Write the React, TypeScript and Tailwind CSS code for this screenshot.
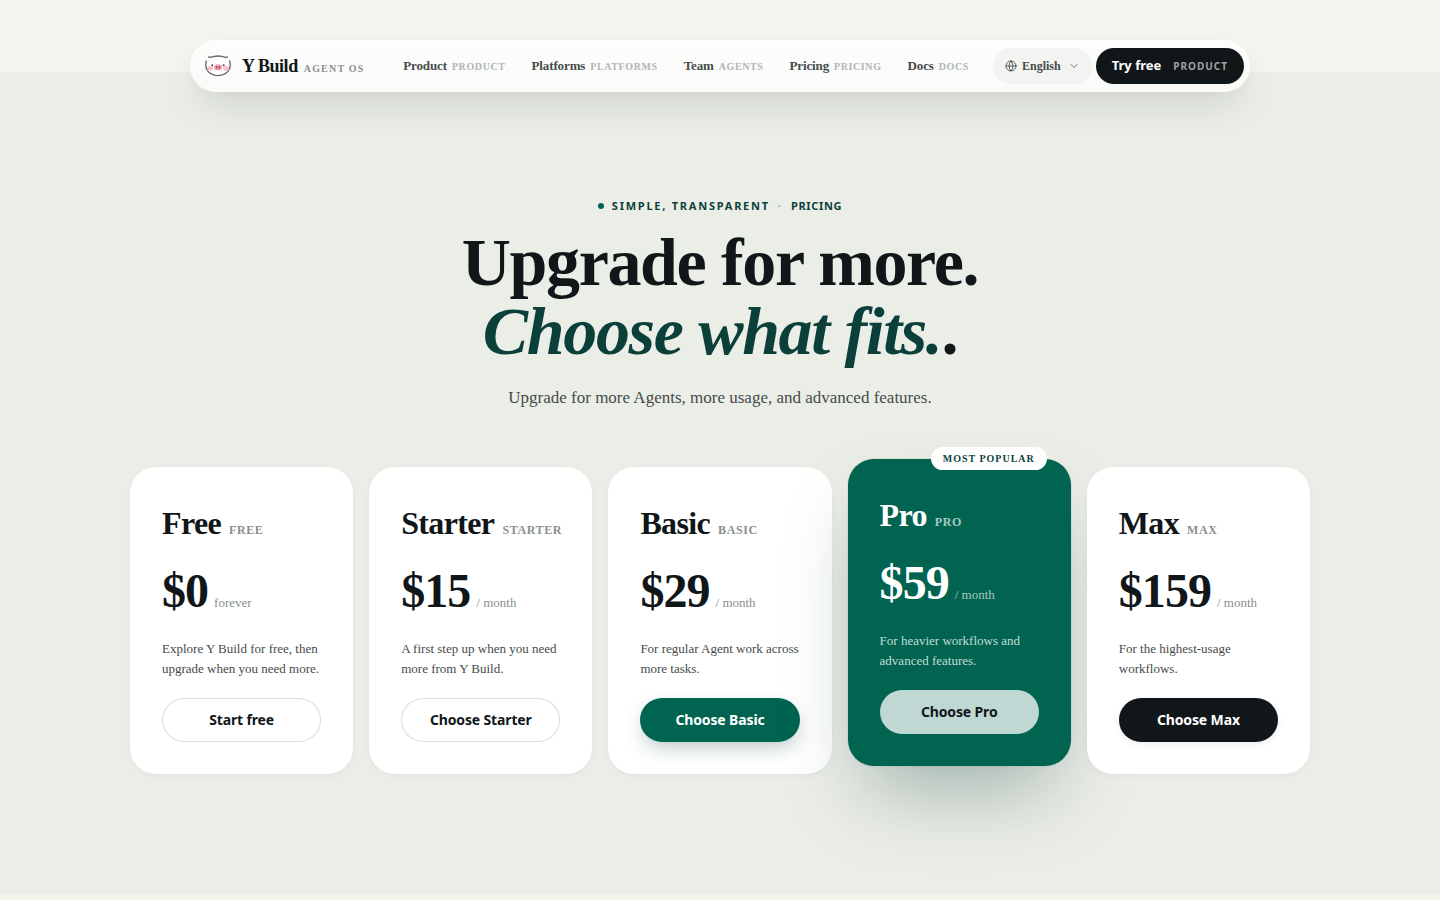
import { ChevronDown, Globe } from 'lucide-react'
import clsx from 'clsx'

interface Plan {
    name: string
    price: string
    period: string
    description: string
    cta: string
    variant: 'outline' | 'green' | 'light' | 'dark'
    popular?: boolean
}

const navLinks = [
    { label: 'Product', tag: 'Product' },
    { label: 'Platforms', tag: 'Platforms' },
    { label: 'Team', tag: 'Agents' },
    { label: 'Pricing', tag: 'Pricing' },
    { label: 'Docs', tag: 'Docs' },
]

const plans: Plan[] = [
    {
        name: 'Free',
        price: '$0',
        period: 'forever',
        description: 'Explore Y Build for free, then upgrade when you need more.',
        cta: 'Start free',
        variant: 'outline',
    },
    {
        name: 'Starter',
        price: '$15',
        period: '/ month',
        description: 'A first step up when you need more from Y Build.',
        cta: 'Choose Starter',
        variant: 'outline',
    },
    {
        name: 'Basic',
        price: '$29',
        period: '/ month',
        description: 'For regular Agent work across more tasks.',
        cta: 'Choose Basic',
        variant: 'green',
    },
    {
        name: 'Pro',
        price: '$59',
        period: '/ month',
        description: 'For heavier workflows and advanced features.',
        cta: 'Choose Pro',
        variant: 'light',
        popular: true,
    },
    {
        name: 'Max',
        price: '$159',
        period: '/ month',
        description: 'For the highest-usage workflows.',
        cta: 'Choose Max',
        variant: 'dark',
    },
]

const buttonStyles = {
    outline: 'bg-white text-[#111618] border border-[#111618]/15',
    green: 'bg-[#006450] text-white shadow-[0_8px_20px_-4px_rgba(10,60,56,0.3)]',
    light: 'bg-[#bfd8d3] text-[#111618]',
    dark: 'bg-[#111618] text-white shadow-[0_2px_6px_rgba(17,22,24,0.08)]',
}

function PigLogo() {
    return (
        <svg viewBox="0 0 84 84" className="w-7 h-7" fill="none" aria-hidden="true">
            <circle cx="42" cy="42" r="41" fill="#fff" stroke="#f0f0ee" />
            <path d="M14 15q7 2 13 -1q15-4 30 0q6 3 13 1" stroke="#6a6a70" strokeWidth="4" strokeLinecap="round" />
            <path d="M7 27C3 43 7 57 20 65c13 7 31 7 44 0c13-8 17-22 13-38" stroke="#6a6a70" strokeWidth="4" strokeLinecap="round" />
            <ellipse cx="18" cy="49" rx="9" ry="7" fill="#f9c0c8" />
            <ellipse cx="66" cy="49" rx="9" ry="7" fill="#f9c0c8" />
            <circle cx="25" cy="40" r="3" fill="#4a4044" />
            <circle cx="59" cy="40" r="3" fill="#4a4044" />
            <ellipse cx="42" cy="46" rx="12" ry="9" fill="#f09aa6" />
            <ellipse cx="38" cy="46" rx="2" ry="4" fill="#a84a5a" />
            <ellipse cx="46" cy="46" rx="2" ry="4" fill="#a84a5a" />
        </svg>
    )
}

function Header() {
    return (
        <header className="relative z-10 px-6 pt-10">
            <nav className="mx-auto flex min-h-[52px] max-w-[1060px] items-center justify-between rounded-full bg-linear-to-b from-[#fdfefc] to-[#fafbf8] py-2 pl-3.5 pr-1.5 shadow-[0_18px_40px_-12px_rgba(17,22,24,0.18),0_2px_8px_rgba(17,22,24,0.03)]">
                <a href="#" className="flex items-center gap-2.5">
                    <PigLogo />
                    <span className="flex items-baseline gap-1.5">
                        <span className="text-lg font-bold tracking-tight text-[#111618]">Y Build</span>
                        <span className="text-[10px] font-semibold uppercase tracking-[0.12em] text-[#8a8f8f]">Agent OS</span>
                    </span>
                </a>

                <div className="flex items-center gap-6">
                    <div className="flex items-center gap-[26px]">
                        {navLinks.map((link) => (
                            <a key={link.label} href="#" className="flex items-baseline gap-[5px]">
                                <span className="text-[13px] font-semibold tracking-[-0.01em] text-[#454b4b]">{link.label}</span>
                                <span className="text-[10px] font-semibold uppercase tracking-[0.06em] text-[#b0b5b4]">{link.tag}</span>
                            </a>
                        ))}
                    </div>

                    <div className="flex items-center gap-1">
                        <button type="button" aria-haspopup="listbox" className="flex h-9 items-center gap-[5px] rounded-full bg-[#f3f4f1] px-3 text-xs font-semibold text-[#454b4b]">
                            <Globe className="w-3 h-3" strokeWidth={1.75} />
                            English
                            <ChevronDown className="w-3 h-3 ml-0.5" strokeWidth={1.5} />
                        </button>
                        <a href="#" className="flex h-9 items-center gap-3 rounded-full bg-[#111618] px-4 font-['Noto_Sans',sans-serif]">
                            <span className="text-[13px] font-bold text-white">Try free</span>
                            <span className="text-[10px] font-bold uppercase tracking-[0.1em] text-[#a0a2a3]">Product</span>
                        </a>
                    </div>
                </div>
            </nav>
        </header>
    )
}

function PlanCard({ plan }: { plan: Plan }) {
    const { popular } = plan

    return (
        <article
            className={clsx(
                'relative flex flex-col rounded-[26px] p-8',
                popular
                    ? '-translate-y-2 bg-[#006450] text-white shadow-[0_40px_80px_-20px_rgba(10,60,56,0.36),0_0_0_1px_rgba(10,60,56,0.06)]'
                    : 'bg-white text-[#111618] shadow-[0_2px_6px_rgba(17,22,24,0.04)]'
            )}
        >
            {popular && (
                <span className="absolute -top-3 right-6 rounded-full bg-white px-3 py-1 text-[10px] leading-[15px] font-bold uppercase tracking-[0.1em] text-[#0b3f3a]">
                    Most popular
                </span>
            )}
            <h2 className="flex items-baseline gap-2 whitespace-nowrap text-[32px] leading-[48px] font-bold tracking-[-0.02em]">
                {plan.name}
                <span className={clsx('text-xs font-semibold uppercase tracking-[0.05em]', popular ? 'text-[#a5cac2]' : 'text-[#8a8f8f]')}>
                    {plan.name}
                </span>
            </h2>
            <p className="mt-5 flex items-baseline gap-1.5">
                <span className="text-5xl leading-[48px] font-bold tracking-[-0.02em]">{plan.price}</span>
                <span className={clsx('text-[13px]', popular ? 'text-[#a5cac2]' : 'text-[#8a8f8f]')}>{plan.period}</span>
            </p>
            <p className={clsx('mt-6 text-[13px] leading-5', popular ? 'text-[#c4dcd7]' : 'text-[#454b4b]')}>{plan.description}</p>
            <button
                type="button"
                className={clsx(
                    "mt-[19px] h-11 w-full rounded-full font-['Noto_Sans',sans-serif] text-sm font-bold tracking-[-0.01em]",
                    buttonStyles[plan.variant]
                )}
            >
                {plan.cta}
            </button>
        </article>
    )
}

export default function App() {
    return (
        <div className="min-h-screen bg-[#f2f6ee] font-['Liberation_Serif',serif]">
            <Header />

            <main className="-mt-5 bg-[#ebeee7] px-6 pt-[124px] pb-[120px]">
                {/* Hero */}
                <div className="text-center">
                    <p className="flex items-center justify-center font-['Noto_Sans',sans-serif] text-[11px] leading-5 font-bold uppercase text-[#0b3f3a]">
                        <span className="mr-2 h-1.5 w-1.5 rounded-full bg-[#006450]" />
                        <span className="tracking-[0.16em]">Simple, transparent</span>
                        <span className="ml-2 mr-2.5 text-[#a3aaa6]">·</span>
                        <span className="tracking-[0.06em]">Pricing</span>
                    </p>
                    <h1 className="mt-3 text-[68px] leading-[69px] font-bold tracking-[-0.02em] text-[#111618]">
                        Upgrade for more.
                        <br />
                        <em className="text-[#0b3f3a]">Choose what fits.</em>.
                    </h1>
                    <p className="mt-[18px] text-[17px] leading-7 text-[#454b4b]">
                        Upgrade for more Agents, more usage, and advanced features.
                    </p>
                </div>

                {/* Plans */}
                <div className="mx-auto mt-[55px] grid max-w-[1180px] grid-cols-1 gap-4 sm:grid-cols-2 lg:grid-cols-5">
                    {plans.map((plan) => (
                        <PlanCard key={plan.name} plan={plan} />
                    ))}
                </div>
            </main>
        </div>
    )
}
